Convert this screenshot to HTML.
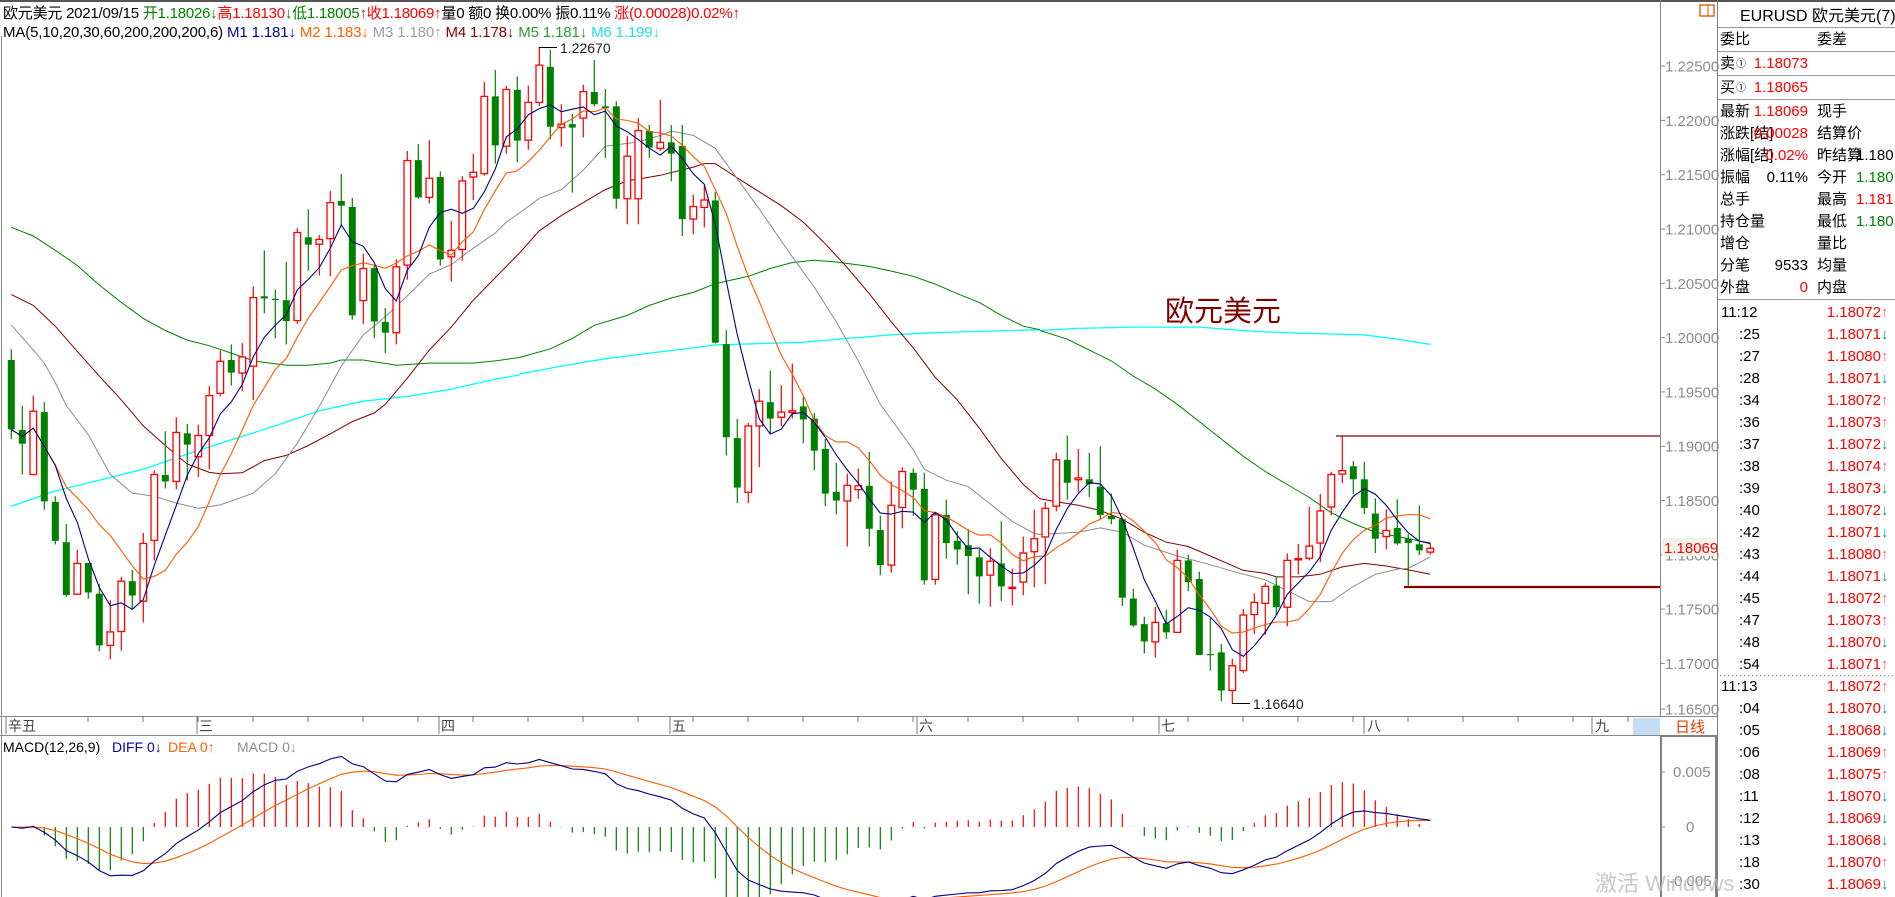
<!DOCTYPE html>
<html><head><meta charset="utf-8">
<style>
html,body{margin:0;padding:0;background:#fff;width:1895px;height:897px;overflow:hidden}
svg{display:block}
text{font-family:"Liberation Sans","Noto Sans CJK SC",sans-serif;font-size:15px}
</style></head>
<body>
<svg id="s" width="1895" height="897" xmlns="http://www.w3.org/2000/svg">
<defs>
<clipPath id="cm"><rect x="2" y="38" width="1658" height="678"/></clipPath>
<clipPath id="cd"><rect x="2" y="736" width="1658" height="161"/></clipPath>
</defs>
<rect x="0" y="0" width="1895" height="897" fill="#fff"/>
<line x1="0" y1="1" x2="1895" y2="1" stroke="#555" stroke-width="2"/>
<line x1="1.5" y1="36" x2="1.5" y2="897" stroke="#888" stroke-width="1"/>
<!-- header -->
<text x="3" y="18" textLength="737" lengthAdjust="spacing"><tspan fill="#000">欧元美元 2021/09/15 </tspan><tspan fill="#008000">开1.18026↓</tspan><tspan fill="#ff0000">高1.18130</tspan><tspan fill="#008000">↓低1.18005</tspan><tspan fill="#ff0000">↑收1.18069↑</tspan><tspan fill="#000">量0 额0 换0.00% 振0.11% </tspan><tspan fill="#ff0000">涨(0.00028)0.02%↑</tspan></text>
<text x="3" y="37" textLength="657" lengthAdjust="spacing"><tspan fill="#000">MA(5,10,20,30,60,200,200,200,6)  </tspan><tspan fill="#0000a0">M1 1.181↓  </tspan><tspan fill="#ff6000">M2 1.183↓  </tspan><tspan fill="#a0a0a0">M3 1.180↑  </tspan><tspan fill="#8b0000">M4 1.178↓  </tspan><tspan fill="#2e9a2e">M5 1.181↓  </tspan><tspan fill="#20e0f0">M6 1.199↓</tspan></text>

<g id="main" clip-path="url(#cm)"></g>
<g id="macd" clip-path="url(#cd)"></g>

<!-- price axis -->
<line x1="1660.5" y1="0" x2="1660.5" y2="716" stroke="#888"/>
<rect x="1700" y="5" width="14" height="11" fill="none" stroke="#e05000" stroke-width="1.3"/>
<line x1="1708" y1="5" x2="1708" y2="16" stroke="#e05000" stroke-width="1"/>
<g id="pax" fill="#8c8c8c"></g>
<rect x="1662" y="538" width="54" height="18" fill="#eef3ea"/>
<text x="1664" y="553" fill="#ff0000">1.18069</text>

<!-- time axis -->
<line x1="0" y1="716.5" x2="1717" y2="716.5" stroke="#888"/>
<line x1="0" y1="735.5" x2="1717" y2="735.5" stroke="#888"/>
<g id="tax" stroke="#777"></g>
<g fill="#444">
<text x="8" y="731" style="font-size:14px">辛丑</text>
<text x="199" y="731" style="font-size:14px">三</text>
<text x="441" y="731" style="font-size:14px">四</text>
<text x="672" y="731" style="font-size:14px">五</text>
<text x="919" y="731" style="font-size:14px">六</text>
<text x="1161" y="731" style="font-size:14px">七</text>
<text x="1367" y="731" style="font-size:14px">八</text>
<text x="1595" y="731" style="font-size:14px">九</text>
</g>
<rect x="1633" y="718" width="27" height="17" fill="#c5dcf5"/>
<text x="1675" y="732" fill="#e04000">日线</text>

<!-- macd axis -->
<rect x="1661" y="736" width="55" height="162" fill="none" stroke="#808080" stroke-width="2"/>
<line x1="1661" y1="772" x2="1665" y2="772" stroke="#888"/>
<line x1="1661" y1="827" x2="1665" y2="827" stroke="#888"/>
<text x="1673" y="777" fill="#8c8c8c">0.005</text>
<text x="1686" y="832" fill="#8c8c8c">0</text>
<text x="1669" y="886" fill="#8c8c8c">-0.005</text>
<text x="3" y="752" fill="#000" style="font-size:14px">MACD(12,26,9)</text>
<text x="112" y="752" fill="#0000a0" style="font-size:14px">DIFF 0↓</text>
<text x="168" y="752" fill="#ff6000" style="font-size:14px">DEA 0↑</text>
<text x="237" y="752" fill="#909090" style="font-size:14px">MACD 0↓</text>

<!-- right panel -->
<line x1="1717.5" y1="0" x2="1717.5" y2="897" stroke="#808080"/>
<g stroke="#999">
<line x1="1717" y1="27.5" x2="1895" y2="27.5"/>
<line x1="1717" y1="51.5" x2="1895" y2="51.5"/>
<line x1="1717" y1="75.5" x2="1895" y2="75.5"/>
<line x1="1717" y1="99.5" x2="1895" y2="99.5"/>
<line x1="1717" y1="299.5" x2="1895" y2="299.5"/>
</g>
<line x1="1720" y1="675.5" x2="1895" y2="675.5" stroke="#888" stroke-dasharray="1,3"/>
<text x="1740" y="21" fill="#000" style="font-size:16px">EURUSD 欧元美元(7)</text>
<g id="panel"></g>
<g id="ticks"></g>

<text x="1595" y="891" fill="#c0c0c0" fill-opacity="0.85" style="font-size:22px">激活 Windows</text>
</svg>
<script>
(function(){
var NS="http://www.w3.org/2000/svg";
function el(p,t,a,txt){var e=document.createElementNS(NS,t);for(var k in a)e.setAttribute(k,a[k]);if(txt!=null)e.textContent=txt;p.appendChild(e);return e;}
var C=[
['g',738,898,713,920],['g',899,931,843,1002],['r',856,1002,820,1004],['g',858,1064,835,1083],['g',1065,1155,1052,1163],
['g',1158,1280,1116,1284],['r',1207,1278,1176,1278],['g',1206,1274,1206,1288],['g',1277,1396,1255,1410],['r',1365,1396,1292,1428],
['r',1248,1364,1238,1408],['g',1248,1281,1222,1312],['r',1161,1294,1137,1343],['r',1002,1154,992,1200],['g',1003,1018,902,1034],
['r',905,1018,870,1036],['g',907,933,885,1016],['r',912,961,887,1008],['r',820,912,798,990],['r',741,815,716,822],
['g',738,767,702,797],['r',731,768,699,810],['r',594,752,568,830],['g',591,596,485,630],['g',597,599,575,688],
['g',600,648,512,702],['r',444,647,434,655],['g',455,472,390,532],['r',460,471,450,543],['r',375,458,348,545],
['g',371,382,309,430],['g',385,635,364,645],['r',527,601,493,655],['g',526,649,518,688],['g',650,675,618,722],
['r',523,675,506,702],['r',278,519,256,553],['g',277,363,240,366],['r',319,363,231,377],['g',316,506,303,520],
['r',485,500,417,557],['r',325,483,314,509],['r',305,316,262,369],['r',130,308,97,313],['g',130,243,69,285],
['r',114,245,106,262],['g',115,232,84,282],
['r',144,231,105,253],['r',58,144,17,152],['g',62,200,23,229],['r',194,202,148,246],['g',194,202,170,352],
['r',119,180,103,225],['g',120,148,46,153],['g',153,157,113,272],['g',153,366,141,389],['r',268,366,221,425],
['r',209,366,180,425],['g',210,248,196,272],['r',236,250,138,256],['g',236,262,196,326],['g',244,413,196,452],
['r',384,413,357,448],['r',369,386,336,432],['g',370,698,350,700],['g',701,916,669,958],['g',918,1032,874,1068],
['r',890,1043,883,1068],['r',833,890,805,985],['g',835,873,762,908],['r',858,870,796,890],['r',855,859,746,873],
['g',845,875,823,930],['g',873,947,860,992],['g',943,1046,920,1075],['g',1042,1062,975,1094],['r',1027,1063,1000,1168],
['r',1028,1037,988,1058],['g',1028,1127,950,1168],['g',1130,1211,1097,1234],['r',1073,1211,1018,1228],['r',995,1078,985,1126],
['g',998,1037,988,1097],['g',1035,1246,998,1256],['r',1095,1244,1088,1256],['g',1095,1160,1060,1196],['g',1155,1175,1133,1210],
['g',1165,1190,1128,1278],['g',1193,1237,1174,1300],['r',1202,1234,1172,1307],['g',1207,1260,1110,1294],['r',1262,1264,1219,1304],
['r',1183,1250,1145,1280],['r',1150,1180,1083,1262],
['r',1080,1146,1066,1255],['r',968,1075,952,1087],['g',968,1021,912,1060],['r',1010,1014,943,1042],['g',1013,1024,952,1054],
['g',1030,1095,937,1105],['g',1097,1105,1046,1117],['g',1105,1286,1105,1305],['g',1288,1350,1265,1353],['g',1347,1387,1330,1415],
['r',1343,1388,1307,1424],['g',1345,1366,1314,1381],['r',1200,1366,1175,1367],['g',1200,1250,1187,1271],['g',1243,1418,1226,1418],
['g',1416,1418,1333,1454],['g',1412,1500,1393,1525],['r',1443,1500,1427,1530],['r',1326,1454,1312,1460],['r',1297,1325,1276,1370],
['r',1260,1299,1252,1372],['g',1258,1308,1237,1326],['r',1200,1308,1184,1352],['r',1196,1198,1162,1232],['r',1167,1195,1076,1200],
['r',1086,1160,1047,1204],['r',1002,1077,996,1096],['r',993,1001,913,1022],['g',983,1013,971,1047],['g',1013,1079,973,1093],
['g',1092,1150,1057,1183],['r',1131,1145,1082,1175],['g',1125,1161,1059,1165],['g',1150,1160,1140,1258],['g',1163,1177,1073,1188],
['r',1172,1181,1160,1187]];
function Y(z){return 40+z/2.306;}
function X(i){return 11.3+11*i;}
var M=document.getElementById('main');
function poly(off,pts,col,w){var s=[];for(var i=0;i<pts.length;i+=2)s.push((off+pts[i]/3).toFixed(1)+','+Y(pts[i+1]).toFixed(1));el(M,'polyline',{points:s.join(' '),fill:'none',stroke:col,'stroke-width':w||1});}
poly(0,[34,1075,166,1040,298,1015,430,990,562,955,694,922,826,890,958,855,1090,833,1222,822,1354,805,1486,782,1560,772],'#00ffff',1.3);
poly(520,[0,770,124,752,256,735,388,722,520,710,586,703,718,700,850,697,982,688,1114,680,1246,675,1378,672,1560,668],'#00ffff',1.3);
poly(1040,[0,670,115,665,280,662,478,662,643,672,775,676,973,680,1072,690,1171,702],'#00ffff',1.3);
poly(0,[34,432,100,452,166,485,232,520,298,565,364,605,430,642,496,670,562,692,628,705,694,722,760,740,859,750,925,750,991,745,1024,738,1090,738,1189,750,1288,745,1420,745,1486,740,1560,732],'#008000');
poly(520,[0,732,91,712,157,688,223,658,322,635,388,612,454,595,520,582,586,562,685,545,751,527,817,513,883,508,949,512,1048,522,1114,533,1180,545,1246,563,1312,585,1378,605,1444,635,1510,660,1560,668],'#008000');
poly(1040,[0,670,82,690,148,715,214,740,280,775,346,805,412,840,478,880,544,920,610,960,676,995,742,1025,808,1055,874,1090,940,1115,1006,1135,1072,1145,1138,1155,1171,1162],'#008000');
poly(0,[34,587,100,612,166,660,232,718,298,775,364,830,430,890,496,935,562,978,628,997,661,1000,727,998,793,970,859,958,925,935,991,908,1057,880,1123,860,1156,840,1222,780,1288,715,1354,662,1420,600,1486,548,1560,490],'#800000');
poly(520,[0,490,58,440,124,405,190,375,256,345,322,325,421,312,520,293,553,285,586,285,652,318,718,350,784,382,850,420,916,470,982,525,1048,585,1114,650,1180,710,1246,778,1312,830,1378,895,1444,965,1510,1025,1560,1058],'#800000');
poly(1040,[0,1058,49,1065,115,1073,181,1085,247,1105,313,1135,379,1158,445,1168,511,1190,577,1212,610,1223,676,1230,709,1238,775,1238,841,1232,907,1215,973,1207,1039,1213,1105,1222,1171,1232],'#800000');
poly(0,[34,657,100,715,133,745,166,790,199,843,265,910,331,1002,397,1045,463,1052,529,1068,595,1080,661,1072,760,1045,826,1000,892,930,958,845,1024,752,1090,680,1156,638,1222,590,1288,540,1354,518,1420,480,1486,445,1519,420,1560,398],'#8c8c8c');
poly(520,[0,398,58,365,124,345,190,300,256,245,355,235,421,220,454,210,520,220,586,250,652,320,718,390,817,500,883,570,949,650,1015,740,1081,840,1180,945,1213,990,1279,1015,1345,1030,1411,1070,1477,1110,1543,1138,1560,1140],'#8c8c8c');
poly(1040,[0,1140,115,1135,181,1125,247,1135,313,1165,412,1190,511,1210,577,1225,676,1245,742,1270,808,1295,874,1295,940,1260,1006,1232,1072,1220,1105,1218,1171,1192],'#8c8c8c');
var cl=[];
for(var i=0;i<C.length;i++){
 var c=C[i],x=X(i),t=Y(c[1]),b=Y(c[2]),h=Y(c[3]),l=Y(c[4]);
 if(b-t<1.2){b=t+1.2;}
 var col=c[0]=='r'?'#ff0000':'#008000';
 el(M,'line',{x1:x,y1:h,x2:x,y2:l,stroke:col,'stroke-width':1.2});
 if(c[0]=='r'){el(M,'rect',{x:x-3.3,y:t,width:6.6,height:b-t,fill:'#fff',stroke:col,'stroke-width':1.3});cl.push(t);}
 else{el(M,'rect',{x:x-3.5,y:t,width:7,height:b-t,fill:col});cl.push(b);}
}
function ma(n){var p=[];for(var i=0;i<cl.length;i++){var s=0,k=0;for(var j=Math.max(0,i-n+1);j<=i;j++){s+=cl[j];k++;}p.push(X(i).toFixed(1)+','+(s/k).toFixed(1));}return p.join(' ');}
el(M,'polyline',{points:ma(10),fill:'none',stroke:'#ff5a00','stroke-width':1.1});
el(M,'polyline',{points:ma(5),fill:'none',stroke:'#000080','stroke-width':1.1});
el(M,'line',{x1:539,y1:47.5,x2:557,y2:47.5,stroke:'#000'});
el(M,'text',{x:560,y:53,fill:'#222',style:'font-size:14px'},'1.22670');
el(M,'line',{x1:1232,y1:703.5,x2:1250,y2:703.5,stroke:'#000'});
el(M,'text',{x:1253,y:709,fill:'#222',style:'font-size:14px'},'1.16640');
el(M,'line',{x1:1336,y1:436,x2:1660,y2:436,stroke:'#800000','stroke-width':1.2});
el(M,'line',{x1:1404,y1:587,x2:1660,y2:587,stroke:'#800000','stroke-width':2.2});
el(M,'text',{x:1165,y:321,fill:'#800000',style:'font-size:29px'},'欧元美元');
var P=document.getElementById('pax');
var labs=['1.22500','1.22000','1.21500','1.21000','1.20500','1.20000','1.19500','1.19000','1.18500','1.18000','1.17500','1.17000','1.16500'];
for(var k=0;k<labs.length;k++){var y=66.1+k*54.3;if(k==12)y=709;
 el(P,'line',{x1:1661,y1:y,x2:1665,y2:y,stroke:'#888'});
 el(P,'text',{x:1665,y:y+5.5},labs[k]);}
var T=document.getElementById('tax');
for(var x=88;x<1660;x+=55){el(T,'line',{x1:x,y1:716,x2:x,y2:722});}
[6,197,439,670,917,1159,1364,1592].forEach(function(x){el(T,'line',{x1:x,y1:716,x2:x,y2:734});});
var D=document.getElementById('macd');
var pr=cl.map(function(y){return 1.225-(y-66.1)/10860;});
var e12=pr[0],e26=pr[0],dea=0,dl=[],de=[];
for(var i=0;i<pr.length;i++){
 e12=e12+(pr[i]-e12)*2/13; e26=e26+(pr[i]-e26)*2/27;
 var diff=e12-e26; dea=dea+(diff-dea)*2/10;
 var m=2*(diff-dea), x=X(i), y0=827, yb=827-m*11000;
 el(D,'line',{x1:x,y1:y0,x2:x,y2:yb,stroke:m>=0?'#ff0000':'#008000','stroke-width':1.2});
 dl.push(x.toFixed(1)+','+(827-diff*11000).toFixed(1));
 de.push(x.toFixed(1)+','+(827-dea*11000).toFixed(1));
}
el(D,'polyline',{points:de.join(' '),fill:'none',stroke:'#ff5a00','stroke-width':1.1});
el(D,'polyline',{points:dl.join(' '),fill:'none',stroke:'#000080','stroke-width':1.1});
var G=document.getElementById('panel');
function tx(x,y,s,col,anchor,st){var a={x:x,y:y,fill:col||'#000'};if(anchor)a['text-anchor']=anchor;if(st)a.style=st;el(G,'text',a,s);}
tx(1720,44,'委比');tx(1817,44,'委差');
tx(1720,68,'卖');tx(1736,67,'①','#000',null,'font-size:10px');tx(1808,68,'1.18073','#ff0000','end');
tx(1720,92,'买');tx(1736,91,'①','#000',null,'font-size:10px');tx(1808,92,'1.18065','#ff0000','end');
var rows=[['最新','1.18069','#ff0000','现手','',''],['涨跌[结]','0.00028','#ff0000','结算价','',''],['涨幅[结]','0.02%','#ff0000','昨结算','1.180','#000'],
['振幅','0.11%','#000','今开','1.180','#008000'],['总手','','','最高','1.181','#ff0000'],['持仓量','','','最低','1.180','#008000'],
['增仓','','','量比','',''],['分笔','9533','#000','均量','',''],['外盘','0','#ff0000','内盘','','']];
for(var r=0;r<rows.length;r++){var y=116+r*22;var q=rows[r];
 tx(1720,y,q[0]);if(q[1])tx(1808,y,q[1],q[2],'end');tx(1817,y,q[3]);if(q[4])tx(1856,y,q[4],q[5]);}
var TK=[['11:12','1.18072',1],[':25','1.18071',0],[':27','1.18080',1],[':28','1.18071',0],[':34','1.18072',1],[':36','1.18073',1],
[':37','1.18072',0],[':38','1.18074',1],[':39','1.18073',0],[':40','1.18072',0],[':42','1.18071',0],[':43','1.18080',1],
[':44','1.18071',0],[':45','1.18072',1],[':47','1.18073',1],[':48','1.18070',0],[':54','1.18071',1],['11:13','1.18072',1],
[':04','1.18070',0],[':05','1.18068',0],[':06','1.18069',1],[':08','1.18075',1],[':11','1.18070',0],[':12','1.18069',0],
[':13','1.18068',0],[':18','1.18070',1],[':30','1.18069',0]];
var K=document.getElementById('ticks');
for(var i=0;i<TK.length;i++){var y=317+i*22;var t=TK[i];
 el(K,'text',{x:t[0].charAt(0)==':'?1739:1721,y:y,fill:'#000'},t[0]);
 el(K,'text',{x:1881,y:y,fill:'#ff0000','text-anchor':'end'},t[1]);
 el(K,'text',{x:1881,y:y,fill:t[2]?'#ff6080':'#00a080'},t[2]?'↑':'↓');}
})();
</script>
</body></html>
